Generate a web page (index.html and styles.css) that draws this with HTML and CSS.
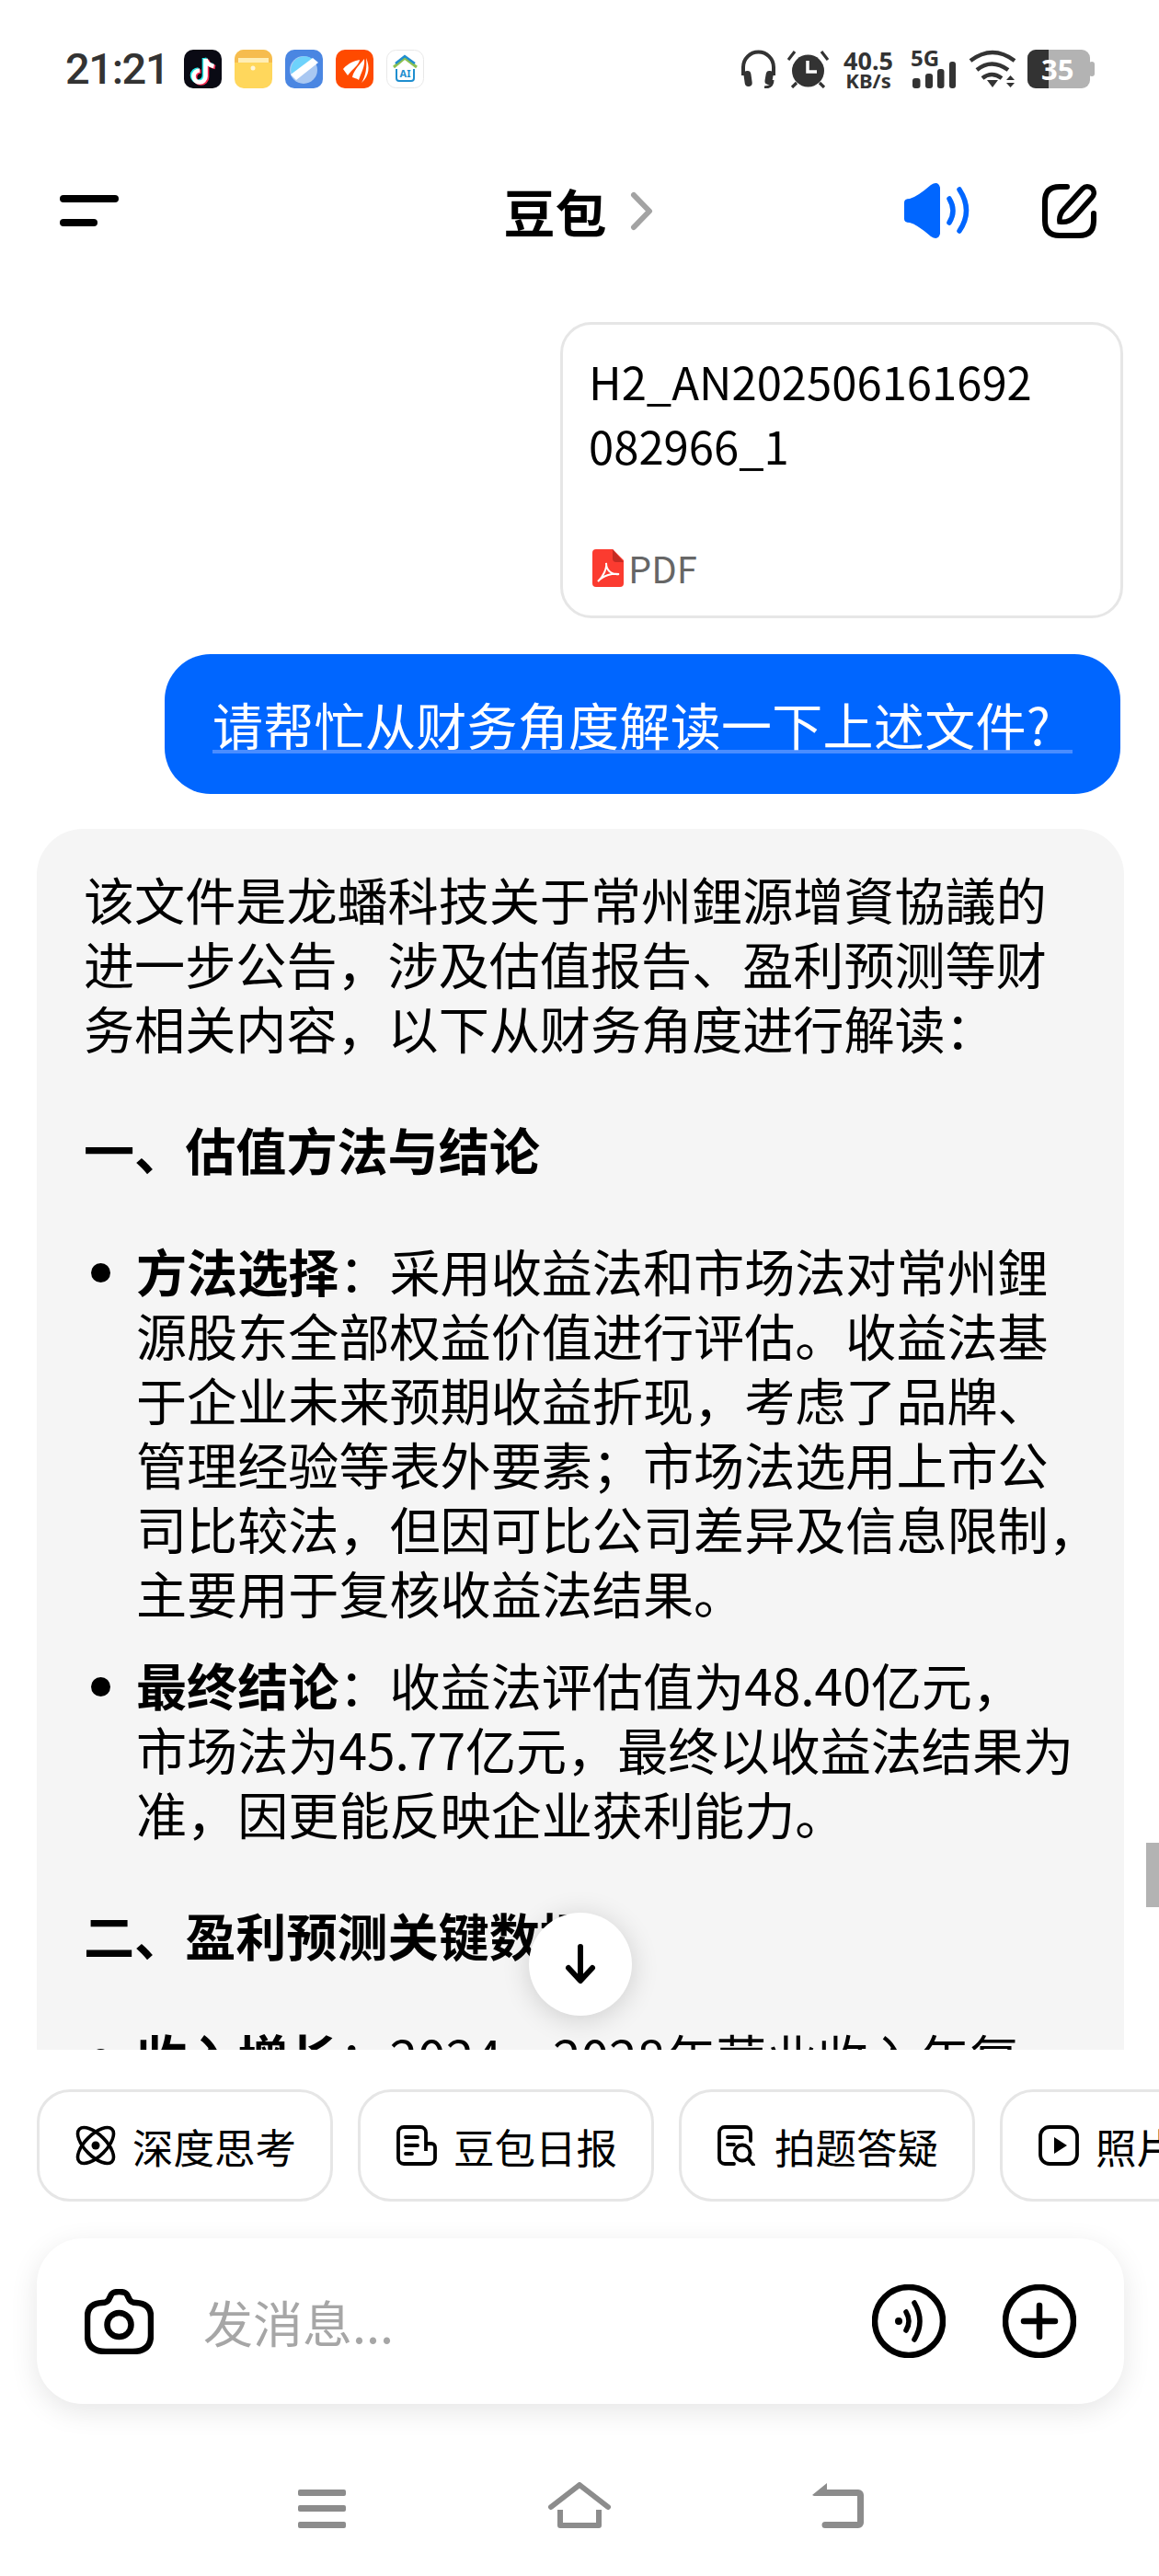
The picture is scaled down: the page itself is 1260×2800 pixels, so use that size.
FILE: index.html
```html
<!DOCTYPE html>
<html lang="zh-CN">
<head>
  <meta charset="UTF-8" />
  <title>豆包</title>
  <link rel="stylesheet" href="styles.css">
</head>
<body>
  <div class="phone">
    <div class="status-bar">
      <div class="time">21:21</div>
      <div class="apps">
        <svg class="app" viewBox="0 0 41 42"><rect width="41" height="42" rx="10" fill="#0a0a14"/><g fill="none" stroke-width="4.6"><path d="M22 9V28a6.5 6.5 0 1 1-6.5-6.5M22 9c1 4 4 7 9 8" stroke="#25e6e6"/><path d="M25 11V30a6.5 6.5 0 1 1-6.5-6.5M25 11c1 4 4 7 9 8" stroke="#ff2d55"/><path d="M23.500 10V29a6.500 6.500 0 1 1-6.500-6.500M23.500 10c1 4 4 7 9 8" stroke="#fff"/></g></svg>
        <svg class="app" viewBox="0 0 41 42"><rect width="41" height="42" rx="10" fill="#ffd75c"/><path d="M0 14V10A10 10 0 0 1 10 0H31A10 10 0 0 1 41 10V14Z" fill="#f6bc4e"/><rect x="4" y="9" width="33" height="5" fill="#ffeeb5"/><circle cx="20" cy="20" r="2.500" fill="#fff6d8"/></svg>
        <svg class="app" viewBox="0 0 41 42"><rect width="41" height="42" rx="10" fill="#4a86e2"/><circle cx="20" cy="22" r="15" fill="#a9c8f2"/><path d="M7 27 30 10A15 15 0 0 0 7 27Z" fill="#6ed2fb"/><path d="M6 27 30 9 36 14 12 33Z" fill="#fff"/></svg>
        <svg class="app" viewBox="0 0 41 42"><rect width="41" height="42" rx="10" fill="#ff4a00"/><path d="M8 21C14 14 21 12 26 11 25 17 19 20 13 28ZM18 30C19 24 24 18 31 10 32 18 28 24 25 33 23 31 20 31 18 30ZM28 36C33 28 34 18 33 9 37 18 37 28 28 36Z" fill="#fff"/></svg>
        <svg class="app" viewBox="0 0 41 42"><rect x=".5" y=".5" width="40" height="41" rx="10" fill="#fff" stroke="#e8e8e8"/><path d="M8 19 20 9 33 19" fill="none" stroke="#8cc152" stroke-width="3"/><path d="M10 15 20 7 31 15" fill="none" stroke="#1f8ecf" stroke-width="2.500"/><path d="M11 21V31a3 3 0 0 0 3 3H27a3 3 0 0 0 3-3V21" fill="none" stroke="#1f8ecf" stroke-width="2"/><text x="20.500" y="30" class="app-ai">AI</text></svg>
      </div>
      <div class="sys-icons">
        <svg class="ic-head" viewBox="0 0 39 42"><path d="M3 28V19a16.500 16.500 0 0 1 33 0V28" fill="none" stroke="#333" stroke-width="4"/><rect x="4" y="23" width="8" height="17" rx="4" fill="#333" transform="rotate(-8 8 31)"/><rect x="27" y="23" width="8" height="15" rx="4" fill="#333" transform="rotate(10 31 31)"/><path d="M35 33c0 6-3 8-9 8" fill="none" stroke="#333" stroke-width="3"/></svg>
        <svg class="ic-alarm" viewBox="0 0 45 42"><circle cx="22.500" cy="23" r="17.500" fill="#333"/><path d="M22 12V24H32" fill="none" stroke="#fff" stroke-width="3.500"/><path d="M1 11 8 2M44 11 37 2M5 41 10 36M40 41 35 36" fill="none" stroke="#333" stroke-width="3.200"/></svg>
        <div class="speed"><div class="speed-num">40.5</div><div class="speed-unit">KB/s</div></div>
        <svg class="ic-net" viewBox="0 0 49 42"><text x="0" y="18" class="net-label">5G</text><rect x="2" y="31" width="8.500" height="11" rx="3" fill="#333"/><rect x="16" y="26" width="8" height="16" rx="3" fill="#333"/><rect x="29" y="21" width="7.500" height="21" rx="3" fill="#333"/><rect x="42" y="13" width="7" height="29" rx="3" fill="#333"/></svg>
        <svg class="ic-wifi" viewBox="0 0 52 42"><path d="M2 12Q26-6 50 12M9 22Q25 9 43 22M15 31Q25 23 36 31" fill="none" stroke="#333" stroke-width="4.500"/><path d="M20 33H32L26 41ZM41 33H50L45.500 28ZM41 36H50L45.500 41Z" fill="#333"/></svg>
        <svg class="ic-batt" viewBox="0 0 73 42"><rect x="67" y="13" width="6" height="16" rx="3" fill="#b3b3b3"/><rect width="68" height="42" rx="9" fill="#b3b3b3"/><path d="M23 0H9A9 9 0 0 0 0 9V33A9 9 0 0 0 9 42H23Z" fill="#333"/><text x="15" y="33" class="batt-label">35</text></svg>
      </div>
    </div>

    <div class="top-bar">
      <div class="menu"><span class="menu-long"></span><span class="menu-short"></span></div>
      <div class="title">
        <span>豆包</span>
        <svg class="chevron" viewBox="0 0 25 43"><path d="M4 4 21 21.500 4 39" fill="none" stroke="#a3a3a3" stroke-width="6" stroke-linecap="round" stroke-linejoin="round"/></svg>
      </div>
      <div class="top-actions">
        <svg class="ic-speaker" viewBox="0 0 73 60"><path d="M0 21Q0 17 6 17 14 15 29 2 37-3 39 5V55Q37 63 29 58 14 45 6 43 0 43 0 39Z" fill="#0066ff"/><path d="M49 17Q57 30 49 43M60 7Q75 30 60 52" fill="none" stroke="#0066ff" stroke-width="5.500" stroke-linecap="round"/></svg>
        <svg class="ic-edit" viewBox="0 0 59 59"><path d="M27 3H19Q3 3 3 19V40Q3 56 19 56H40Q56 56 56 40V32" fill="none" stroke="#000" stroke-width="6" stroke-linecap="round"/><path d="M19 41C18 35 21 30 25 26L44 5C48 1 55 3 56 8 57 11 55 14 53 16L35 36C31 40 25 42 19 41Z" fill="none" stroke="#000" stroke-width="5.500"/></svg>
      </div>
    </div>

    <div class="chat">
      <div class="file-card">
        <div class="file-name">H2_AN202506161692<br>082966_1</div>
        <div class="file-type">
          <svg class="ic-pdf" viewBox="0 0 34 41"><path d="M4 0H22L34 12V37A4 4 0 0 1 30 41H4A4 4 0 0 1 0 37V4A4 4 0 0 1 4 0Z" fill="#fb3b30"/><path d="M22 0 34 14H26A4 4 0 0 1 22 10Z" fill="#c42b23"/><path d="M6 35C12 30 16 20 15 15 15 24 22 28 29 27 22 26 12 28 6 35Z" fill="none" stroke="#fff" stroke-width="2"/></svg>
          <span>PDF</span>
        </div>
      </div>

      <div class="user-bubble"><span class="user-text">请帮忙从财务角度解读一下上述文件?</span></div>

      <div class="answer">
        <p>该文件是龙蟠科技关于常州鋰源增資協議的<br>进一步公告，涉及估值报告、盈利预测等财<br>务相关内容，以下从财务角度进行解读：</p>
        <h3>一、估值方法与结论</h3>
        <ul>
          <li><b>方法选择</b>：采用收益法和市场法对常州鋰<br>源股东全部权益价值进行评估。收益法基<br>于企业未来预期收益折现，考虑了品牌、<br>管理经验等表外要素；市场法选用上市公<br>司比较法，但因可比公司差异及信息限制，<br>主要用于复核收益法结果。</li>
          <li><b>最终结论</b>：收益法评估值为48.40亿元，<br>市场法为45.77亿元，最终以收益法结果为<br>准，因更能反映企业获利能力。</li>
        </ul>
        <h3>二、盈利预测关键数据</h3>
        <ul>
          <li><b>收入增长</b>：2024—2028年营业收入年复</li>
        </ul>
      </div>
    </div>

    <div class="chips">
      <div class="chip">
        <svg class="chip-icon" viewBox="0 0 44 44"><g fill="none" stroke="#000" stroke-width="3.600"><ellipse cx="22" cy="22" rx="25" ry="11.500" transform="rotate(45 22 22)"/><ellipse cx="22" cy="22" rx="25" ry="11.500" transform="rotate(-45 22 22)"/></g><circle cx="22" cy="22" r="4.500"/></svg>
        <span>深度思考</span>
      </div>
      <div class="chip">
        <svg class="chip-icon" viewBox="0 0 44 44"><path d="M32 28V8A6 6 0 0 0 26 2H8A6 6 0 0 0 2 8V36A6 6 0 0 0 8 42H36A6 6 0 0 0 42 36V24A4 4 0 0 0 38 20H32" fill="none" stroke="#000" stroke-width="3.800"/><path d="M10 13H23M10 22H23M10 31H17" stroke="#000" stroke-width="3.800" stroke-linecap="round"/></svg>
        <span>豆包日报</span>
      </div>
      <div class="chip">
        <svg class="chip-icon" viewBox="0 0 44 44"><path d="M36 17V8A6 6 0 0 0 30 2H8A6 6 0 0 0 2 8V36A6 6 0 0 0 8 42H18" fill="none" stroke="#000" stroke-width="3.800" stroke-linecap="round"/><path d="M11 13H27M11 21H18" stroke="#000" stroke-width="3.800" stroke-linecap="round"/><circle cx="27" cy="30" r="8.500" fill="none" stroke="#000" stroke-width="3.800"/><path d="M34 37 39 43" stroke="#000" stroke-width="3.800" stroke-linecap="round"/></svg>
        <span>拍题答疑</span>
      </div>
      <div class="chip">
        <svg class="chip-icon" viewBox="0 0 44 44"><rect x="2" y="2" width="40" height="40" rx="10" fill="none" stroke="#000" stroke-width="3.800"/><path d="M17 13 31 22 17 31Z"/></svg>
        <span>照片解析</span>
      </div>
    </div>

    <div class="composer">
      <svg class="ic-camera" viewBox="0 0 75 71"><path d="M26 12 29 6Q31 3 37.500 3 44 3 46 6L49 12Q51 15 56 15 72 16 72 30V50Q72 68 52 68H23Q3 68 3 50V30Q3 16 19 15 24 15 26 12Z" fill="none" stroke="#000" stroke-width="6.500"/><circle cx="37.500" cy="39" r="13" fill="none" stroke="#000" stroke-width="6.500"/></svg>
      <div class="placeholder">发消息...</div>
      <svg class="round-btn" viewBox="0 0 80 80"><circle cx="40" cy="40" r="37" fill="none" stroke="#000" stroke-width="6.500"/><circle cx="29" cy="40" r="4"/><path d="M37 30Q43 40 37 50M46 20Q58 40 46 60" fill="none" stroke="#000" stroke-width="5.500" stroke-linecap="round"/></svg>
      <svg class="round-btn plus-btn" viewBox="0 0 80 80"><circle cx="40" cy="40" r="37" fill="none" stroke="#000" stroke-width="6.500"/><path d="M40 23V57M23 40H57" stroke="#000" stroke-width="6.500" stroke-linecap="round"/></svg>
    </div>

    <div class="nav-bar">
      <svg class="nav-menu" viewBox="0 0 52 50"><rect y="8" width="52" height="7" rx="2" fill="#8c8c8c"/><rect y="25" width="52" height="7" rx="2" fill="#8c8c8c"/><rect y="43" width="52" height="7" rx="2" fill="#8c8c8c"/></svg>
      <svg class="nav-home" viewBox="0 0 68 50"><path d="M3 27 34 3 65 27" fill="none" stroke="#8c8c8c" stroke-width="6" stroke-linecap="round" stroke-linejoin="round"/><path d="M13 30V47H55V30" fill="none" stroke="#8c8c8c" stroke-width="6" stroke-linejoin="round"/></svg>
      <svg class="nav-back" viewBox="0 0 56 50"><path d="M0 14 16 1V8H50A6 6 0 0 1 56 14V44A6 6 0 0 1 50 50H14A3.500 3.500 0 0 1 14 43H49V15H2Z" fill="#8c8c8c"/></svg>
    </div>

    <div class="scroll-thumb"></div>
    <div class="down-btn">
      <svg class="ic-down" viewBox="0 0 36 44"><path d="M18 3V39M5 26 18 40 31 26" fill="none" stroke="#000" stroke-width="6" stroke-linecap="round" stroke-linejoin="round"/></svg>
    </div>
  </div>
</body>
</html>
```
FILE: styles.css
```css
* {
  box-sizing: border-box;
}
body {
  margin: 0;
  background: #fff;
  font-family: "Noto Sans CJK SC", "Noto Sans", sans-serif;
  color: #000;
}
svg {
  display: block;
  flex: none;
}
.phone {
  position: relative;
  width: 1260px;
  height: 2800px;
  overflow: hidden;
  display: flex;
  flex-direction: column;
}

/* status bar */
.status-bar {
  height: 150px;
  flex: none;
  padding: 54px 70px 0 71px;
  display: flex;
  align-items: flex-start;
}
.time {
  width: 129px;
  height: 42px;
  font-family: Roboto, sans-serif;
  font-weight: 500;
  font-size: 47px;
  line-height: 42px;
  letter-spacing: -1.400px;
  color: #333;
}
.apps {
  display: flex;
  gap: 14px;
}
.app {
  width: 41px;
  height: 42px;
}
.app-ai {
  font-family: "Noto Sans", sans-serif;
  font-size: 11px;
  font-weight: 700;
  fill: #1f8ecf;
  text-anchor: middle;
}
.sys-icons {
  margin-left: auto;
  display: flex;
}
.ic-head {
  width: 39px;
  height: 42px;
}
.ic-alarm {
  width: 45px;
  height: 42px;
  margin-left: 12px;
}
.speed {
  width: 54px;
  margin-left: 16px;
  text-align: center;
  color: #333;
  font-family: "Noto Sans", sans-serif;
  font-weight: 700;
  white-space: nowrap;
}
.speed-num {
  font-size: 27px;
  line-height: 23px;
}
.speed-unit {
  font-size: 22px;
  line-height: 22px;
  margin-top: -1px;
}
.ic-net {
  width: 49px;
  height: 42px;
  margin-left: 19px;
}
.net-label {
  font-family: "Noto Sans", sans-serif;
  font-size: 24px;
  font-weight: 700;
  fill: #333;
}
.ic-wifi {
  width: 52px;
  height: 42px;
  margin-left: 14px;
}
.ic-batt {
  width: 73px;
  height: 42px;
  margin-left: 12px;
}
.batt-label {
  font-family: "Noto Sans", sans-serif;
  font-size: 31px;
  font-weight: 700;
  fill: #fff;
}

/* top bar */
.top-bar {
  height: 158px;
  flex: none;
  padding: 0 68px 0 65px;
  display: grid;
  grid-template-columns: 1fr auto 1fr;
  align-items: center;
}
.menu {
  display: flex;
  flex-direction: column;
  gap: 18px;
}
.menu span {
  display: block;
  height: 8px;
  border-radius: 4px;
  background: #000;
}
.menu-long {
  width: 64px;
}
.menu-short {
  width: 41px;
}
.title {
  display: flex;
  align-items: center;
  gap: 25px;
  font-size: 56px;
  font-weight: 700;
  line-height: 70px;
}
.chevron {
  width: 25px;
  height: 43px;
}
.top-actions {
  justify-self: end;
  display: flex;
  align-items: center;
  gap: 77px;
}
.ic-speaker {
  width: 73px;
  height: 60px;
}
.ic-edit {
  width: 59px;
  height: 59px;
}

/* chat */
.chat {
  height: 1920px;
  flex: none;
  overflow: hidden;
  padding-top: 42px;
  display: flex;
  flex-direction: column;
  align-items: flex-end;
}
.file-card {
  width: 612px;
  height: 322px;
  flex: none;
  margin-right: 39px;
  padding: 26px 20px 30px 28px;
  border: 3px solid #e6e6e6;
  border-radius: 34px;
  display: flex;
  flex-direction: column;
  justify-content: space-between;
}
.file-name {
  font-size: 49px;
  line-height: 70px;
  white-space: nowrap;
}
.file-type {
  display: flex;
  align-items: center;
  gap: 5px;
  margin: 0 0 1px 4px;
  font-size: 40px;
  line-height: 41px;
  color: #666;
}
.ic-pdf {
  width: 34px;
  height: 41px;
}
.user-bubble {
  width: 1039px;
  height: 152px;
  flex: none;
  margin-top: 39px;
  margin-right: 42px;
  padding: 48px 0 0 52px;
  border-radius: 50px;
  background: #0066ff;
}
.user-text {
  display: block;
  width: 935px;
  height: 60px;
  font-size: 55px;
  line-height: 54px;
  letter-spacing: .3px;
  color: #fff;
  white-space: nowrap;
  border-bottom: 4px solid #4a8dff;
}
.answer {
  width: 1182px;
  flex: none;
  margin-top: 38px;
  margin-right: 38px;
  padding: 40px 40px 80px 51px;
  border-radius: 50px;
  background: #f5f5f5;
  font-size: 55.100px;
  line-height: 70px;
  white-space: nowrap;
}
.answer p {
  margin: 0;
}
.answer h3 {
  margin: 62px 0 0;
  font-size: 55.100px;
  font-weight: 700;
}
.answer ul {
  margin: 62px 0 0;
  padding-left: 57px;
}
.answer li + li {
  margin-top: 30px;
}

/* suggestion chips */
.chips {
  flex: none;
  margin-top: 43px;
  padding-left: 40px;
  display: flex;
  gap: 27px;
  overflow: hidden;
}
.chip {
  width: 322px;
  height: 122px;
  flex: none;
  padding-left: 39px;
  border: 3px solid #e6e6e6;
  border-radius: 36px;
  display: flex;
  align-items: center;
  gap: 18px;
  font-size: 44.500px;
  white-space: nowrap;
}
.chip-icon {
  width: 44px;
  height: 44px;
}

/* composer */
.composer {
  width: 1182px;
  height: 180px;
  flex: none;
  margin: 40px 0 0 40px;
  padding: 0 52px;
  border-radius: 50px;
  background: #fff;
  box-shadow: 0 8px 30px rgba(0, 0, 0, 0.1);
  display: flex;
  align-items: center;
}
.ic-camera {
  width: 75px;
  height: 71px;
}
.placeholder {
  flex: 1;
  margin-left: 54px;
  font-size: 54px;
  color: #a6a6a6;
}
.round-btn {
  width: 80px;
  height: 80px;
}
.plus-btn {
  margin-left: 62px;
}

/* navigation */
.nav-bar {
  flex: 1;
  padding: 85px 0 0 324px;
  display: flex;
  align-items: flex-start;
}
.nav-menu {
  width: 52px;
  height: 50px;
}
.nav-home {
  width: 68px;
  height: 50px;
  margin-left: 220px;
}
.nav-back {
  width: 56px;
  height: 50px;
  margin-left: 219px;
}

/* overlays */
.scroll-thumb {
  position: absolute;
  left: 1246px;
  top: 2003px;
  width: 14px;
  height: 70px;
  background: #b3b3b3;
}
.down-btn {
  position: absolute;
  left: 575px;
  top: 2079px;
  width: 112px;
  height: 112px;
  border-radius: 50%;
  background: #fff;
  box-shadow: 0 4px 30px rgba(0, 0, 0, 0.16);
  display: flex;
  align-items: center;
  justify-content: center;
}
.ic-down {
  width: 36px;
  height: 44px;
}
```
